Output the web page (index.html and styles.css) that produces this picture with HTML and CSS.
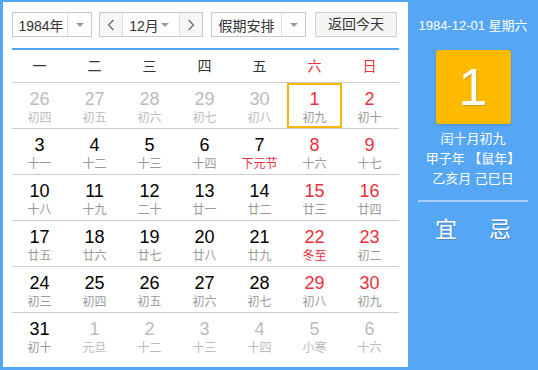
FILE: index.html
```html
<!DOCTYPE html>
<html lang="zh-CN">
<head>
    <meta charset="UTF-8">
    <title>万年历</title>
    <link rel="stylesheet" href="styles.css">
</head>
<body>
    <div class="calendar">
        <div class="main">
            <div class="toolbar">
                <div class="select year-select">
                    <span class="select-text">1984年</span>
                    <span class="select-arrow"><i class="caret"></i></span>
                </div>
                <div class="select month-select">
                    <span class="nav-btn"><svg width="8" height="12" viewBox="0 0 8 12"><polyline points="6.5,1 1.5,6 6.5,11" fill="none" stroke="#666" stroke-width="1.2"/></svg></span>
                    <span class="select-text">12月</span>
                    <i class="caret"></i>
                    <span class="nav-btn right"><svg width="8" height="12" viewBox="0 0 8 12"><polyline points="1.5,1 6.5,6 1.5,11" fill="none" stroke="#666" stroke-width="1.2"/></svg></span>
                </div>
                <div class="select holiday-select">
                    <span class="select-text">假期安排</span>
                    <span class="select-arrow"><i class="caret"></i></span>
                </div>
                <div class="today-btn">返回今天</div>
            </div>

            <div class="week-head">
                <span>一</span><span>二</span><span>三</span><span>四</span><span>五</span>
                <span class="weekend">六</span><span class="weekend">日</span>
            </div>

            <div id="days" class="days"></div>
        </div>

        <div class="side">
            <div class="side-date">1984-12-01 星期六</div>
            <div class="big-day">1</div>
            <div class="lunar-info">
                <div>闰十月初九</div>
                <div>甲子年 【鼠年】</div>
                <div>乙亥月 己巳日</div>
            </div>
            <div class="side-line"></div>
            <div class="yiji">
                <span>宜</span><span>忌</span>
            </div>
        </div>
    </div>

    <script>
        // [day, lunar, flags]  o = other month, f = festival, s = selected
        const weeks = [
            [[26, "初四", "o"], [27, "初五", "o"], [28, "初六", "o"], [29, "初七", "o"], [30, "初八", "o"], [1, "初九", "s"], [2, "初十", ""]],
            [[3, "十一", ""], [4, "十二", ""], [5, "十三", ""], [6, "十四", ""], [7, "下元节", "f"], [8, "十六", ""], [9, "十七", ""]],
            [[10, "十八", ""], [11, "十九", ""], [12, "二十", ""], [13, "廿一", ""], [14, "廿二", ""], [15, "廿三", ""], [16, "廿四", ""]],
            [[17, "廿五", ""], [18, "廿六", ""], [19, "廿七", ""], [20, "廿八", ""], [21, "廿九", ""], [22, "冬至", "f"], [23, "初二", ""]],
            [[24, "初三", ""], [25, "初四", ""], [26, "初五", ""], [27, "初六", ""], [28, "初七", ""], [29, "初八", ""], [30, "初九", ""]],
            [[31, "初十", ""], [1, "元旦", "o"], [2, "十二", "o"], [3, "十三", "o"], [4, "十四", "o"], [5, "小寒", "o"], [6, "十六", "o"]]
        ];

        const days = document.getElementById("days");
        weeks.forEach(week => {
            const row = document.createElement("div");
            row.className = "week";
            week.forEach((d, i) => {
                const cell = document.createElement("div");
                cell.className = "day";
                if (i >= 5) cell.classList.add("weekend");
                if (d[2].includes("o")) cell.classList.add("other");
                if (d[2].includes("f")) cell.classList.add("festival");
                if (d[2].includes("s")) cell.classList.add("selected");
                cell.innerHTML = `<div class="num">${d[0]}</div><div class="lunar">${d[1]}</div>`;
                row.appendChild(cell);
            });
            days.appendChild(row);
        });
    </script>
</body>
</html>
```

FILE: styles.css
```css
body {
    margin: 0;
    background: #56a6f6;
    font-family: "Liberation Sans", "Noto Sans CJK SC", sans-serif;
}

.calendar {
    display: flex;
    width: 538px;
    height: 370px;
}

.main {
    width: 387px;
    margin: 2px 0 3px 3px;
    padding: 10px 9px 0 9px;
    background: #fff;
}

.toolbar {
    display: flex;
    height: 25px;
}

.select {
    display: flex;
    align-items: center;
    height: 23px;
    border: 1px solid #c8c8c8;
    background: #fff;
    font-size: 14px;
    color: #333;
}

.select-text {
    flex: 1;
    text-align: center;
}

.select-arrow {
    display: flex;
    align-items: center;
    justify-content: center;
    width: 23px;
    height: 100%;
    border-left: 1px solid #ddd;
}

.caret {
    display: block;
    width: 0;
    height: 0;
    border-left: 4px solid transparent;
    border-right: 4px solid transparent;
    border-top: 4px solid #999;
}

.year-select {
    width: 78px;
}

.year-select .select-text {
    padding-left: 2px;
}

.month-select {
    width: 102px;
    margin-left: 7px;
}

.month-select .select-text {
    padding-left: 4px;
}

.month-select .caret {
    margin-right: 10px;
}

.nav-btn {
    display: flex;
    align-items: center;
    justify-content: center;
    width: 22px;
    height: 100%;
    background: #f6f6f6;
    border-right: 1px solid #ddd;
}

.nav-btn.right {
    border-right: none;
    border-left: 1px solid #ddd;
}

.holiday-select {
    width: 93px;
    margin-left: 8px;
}

.today-btn {
    width: 80px;
    height: 23px;
    margin-left: 9px;
    border: 1px solid #d0d0d0;
    background: #f5f5f5;
    font-size: 14px;
    line-height: 23px;
    text-align: center;
    color: #333;
}

.week-head {
    display: grid;
    grid-template-columns: repeat(7, 55px);
    height: 32px;
    margin-top: 11px;
    border-top: 2px solid #56a6f6;
    border-bottom: 1px solid #ccc;
    font-size: 14px;
    line-height: 32px;
    text-align: center;
    color: #333;
}

.week-head .weekend {
    color: #e8303a;
}

.week {
    display: grid;
    grid-template-columns: repeat(7, 55px);
    height: 45px;
}

.week + .week {
    border-top: 1px solid #ccc;
}

.day {
    text-align: center;
}

.num {
    padding-top: 6px;
    font-size: 18px;
    line-height: 20px;
    color: #000;
}

.lunar {
    margin-top: 1px;
    font-size: 12px;
    line-height: 16px;
    color: #999;
}

.day.weekend .num {
    color: #e8303a;
}

.day.festival .lunar {
    color: #e8303a;
}

.day.other .num,
.day.weekend.other .num {
    color: #bbb;
}

.day.other .lunar {
    color: #bbb;
}

.day.selected {
    box-shadow: inset 0 0 0 2px #f8b800;
}

.side {
    flex: 1;
    display: flex;
    flex-direction: column;
    align-items: center;
    color: #fff;
}

.side-date {
    margin-top: 17px;
    font-size: 13px;
    line-height: 18px;
}

.big-day {
    width: 75px;
    height: 74px;
    margin-top: 15px;
    border-radius: 3px;
    background: #ffba00;
    box-shadow: 0 1px 3px rgba(0, 0, 0, 0.15);
    font-size: 52px;
    line-height: 74px;
    text-align: center;
    text-shadow: 1px 1px 1px rgba(0, 0, 0, 0.2);
}

.lunar-info {
    margin-top: 5px;
    font-size: 13px;
    line-height: 20px;
    text-align: center;
}

.side-line {
    width: 110px;
    height: 2px;
    margin-top: 11px;
    background: #a6cff8;
}

.yiji {
    display: flex;
    gap: 32px;
    margin-top: 13px;
    font-size: 22px;
    line-height: 30px;
    text-shadow: 1px 1px 1px rgba(0, 0, 0, 0.2);
}
```
